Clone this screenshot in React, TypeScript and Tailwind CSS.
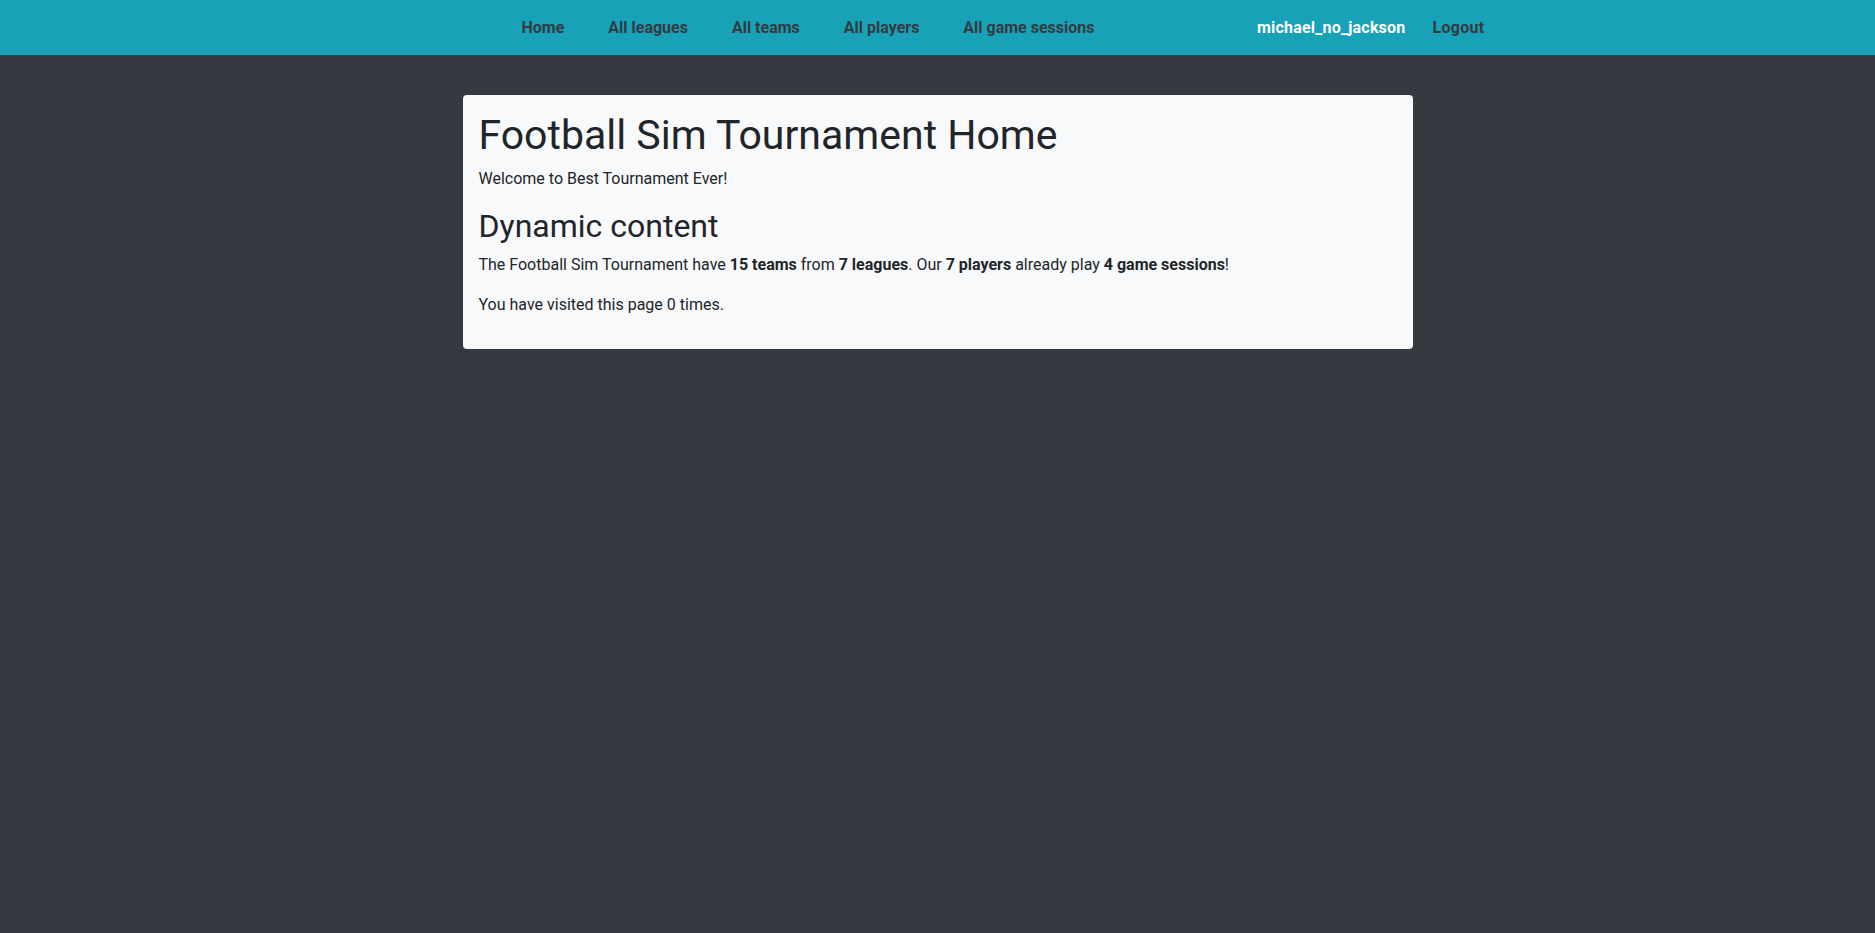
import React from "react";

const navLinks = ["Home", "All leagues", "All teams", "All players", "All game sessions"];

export default function App() {
  return (
    <div className="min-h-screen bg-[#343a40] font-['Roboto',sans-serif] text-[#212529]">
      <nav className="bg-[#17a2b8]">
        <div className="w-[1110px] mx-auto h-[55px] flex items-center justify-between">
          <ul className="flex items-center gap-[44px] pl-[139px] font-bold text-[16px] text-[#343a40]">
            {navLinks.map((l) => (
              <li key={l}>
                <a href="#">{l}</a>
              </li>
            ))}
          </ul>
          <div className="flex items-center gap-[27px] pr-[8px] font-bold text-[16px]">
            <span className="text-white tracking-[0.2px]">michael_no_jackson</span>
            <a href="#" className="text-[#343a40] tracking-[0.3px]">Logout</a>
          </div>
        </div>
      </nav>

      <main className="w-[950px] mx-auto pt-[40px]">
        <div className="bg-[#f8f9fa] rounded p-4">
          <h1 className="text-[41px] leading-[48px] font-normal mb-2">Football Sim Tournament Home</h1>
          <p className="leading-6 mb-4">Welcome to Best Tournament Ever!</p>
          <h2 className="text-[32px] leading-[38px] font-normal mb-2">Dynamic content</h2>
          <p className="leading-6 mb-4">
            The Football Sim Tournament have <b>15 teams</b> from <b>7 leagues</b>. Our <b>7 players</b> already play{" "}
            <b>4 game sessions</b>!
          </p>
          <p className="leading-6 mb-4">You have visited this page 0 times.</p>
        </div>
      </main>
    </div>
  );
}
